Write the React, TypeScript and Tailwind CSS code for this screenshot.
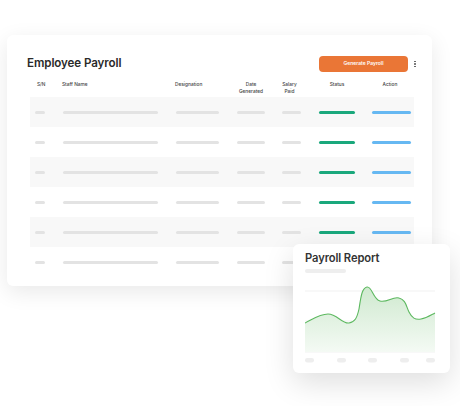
import React from "react";

const font = { fontFamily: "Inter, 'Liberation Sans', sans-serif" };

function Row({ shaded }: { shaded: boolean }) {
  return (
    <div className={`flex h-[30px] items-center ${shaded ? "bg-[#f8f8f8]" : "bg-white"}`}>
      <div className="w-[25px] flex">
        <div className="ml-[5px] h-[3px] w-[10px] rounded-full bg-[#e3e3e3]" />
      </div>
      <div className="w-[115px] flex">
        <div className="ml-[8px] h-[3px] w-[95px] rounded-full bg-[#e3e3e3]" />
      </div>
      <div className="w-[58px] flex">
        <div className="ml-[6px] h-[3px] w-[43px] rounded-full bg-[#e3e3e3]" />
      </div>
      <div className="w-[46px] flex justify-center">
        <div className="h-[3px] w-[28px] rounded-full bg-[#e3e3e3]" />
      </div>
      <div className="w-[34px] flex justify-center">
        <div className="h-[3px] w-[19px] rounded-full bg-[#e3e3e3]" />
      </div>
      <div className="w-[58px] flex justify-center">
        <div className="h-[3px] w-[36px] rounded-full bg-[#1aa87c]" />
      </div>
      <div className="w-[48px] flex justify-center">
        <div className="ml-[3px] h-[3px] w-[39px] rounded-full bg-[#66b8f2]" />
      </div>
    </div>
  );
}

export default function App() {
  const rows = [true, false, true, false, true, false];
  return (
    <div className="relative w-[460px] h-[406px] bg-white overflow-hidden" style={font}>
      <div className="pt-[35px] pl-[7px]">
        <div className="w-[425px] h-[251px] rounded-[6px] bg-white shadow-[0_6px_22px_rgba(0,0,0,0.09)] pt-[21px]">
          <div className="flex items-center justify-between h-[16px] pl-[20px] pr-[16px]">
            <div className="text-[11.6px] font-semibold text-[#2a2a2a] tracking-[-0.1px]">Employee Payroll</div>
            <div className="flex items-center gap-[6px]">
              <div className="w-[89px] h-[16px] rounded-[4px] bg-[#ea7636] flex items-center justify-center text-[5px] font-semibold text-white">
                Generate Payroll
              </div>
              <div className="flex flex-col gap-[1px] w-[2px]">
                <div className="w-[1.5px] h-[1.5px] rounded-full bg-[#555]" />
                <div className="w-[1.5px] h-[1.5px] rounded-full bg-[#555]" />
                <div className="w-[1.5px] h-[1.5px] rounded-full bg-[#555]" />
              </div>
            </div>
          </div>
          <div className="ml-[23px] w-[384px] mt-[9px]">
            <div className="flex h-[16px] items-start text-[4.8px] leading-[7px] font-medium text-[#444]">
              <div className="w-[25px] pl-[7px]">S/N</div>
              <div className="w-[115px] pl-[7px]">Staff Name</div>
              <div className="w-[58px] pl-[5px]">Designation</div>
              <div className="w-[46px] text-center">Date<br />Generated</div>
              <div className="w-[34px] text-center pr-[3px]">Salary<br />Paid</div>
              <div className="w-[58px] text-center">Status</div>
              <div className="w-[48px] text-center">Action</div>
            </div>
            {rows.map((s, i) => (
              <Row key={i} shaded={s} />
            ))}
          </div>
        </div>
      </div>

      <div className="absolute left-[293px] top-[244px] w-[157px] h-[129px] rounded-[6px] bg-white shadow-[0_10px_30px_rgba(0,0,0,0.13)] pl-[12px] pt-[7px]">
        <div className="text-[11.2px] font-semibold text-[#333] leading-[14px] tracking-[-0.1px]">Payroll Report</div>
        <div className="mt-[4px] h-[4px] w-[41px] rounded-full bg-[#eeeeee]" />
        <svg width="131" height="82" viewBox="0 0 131 82" className="mt-[11px] block">
          <defs>
            <linearGradient id="g" x1="0" y1="0" x2="0" y2="1">
              <stop offset="0%" stopColor="#cfe9cf" />
              <stop offset="100%" stopColor="#f4faf4" />
            </linearGradient>
          </defs>
          <line x1="0" y1="7" x2="130" y2="7" stroke="#ededed" strokeWidth="0.8" />
          <line x1="0" y1="37" x2="130" y2="37" stroke="#ededed" strokeWidth="0.8" />
          <line x1="0" y1="68" x2="130" y2="68" stroke="#ededed" strokeWidth="0.8" />
          <path
            d="M0,39 C8,35 15,30 23,30 C32,30 37,40 44,39 C50,38 52,34 54,25 C56,12 57,4 62,3 C67,2 68,15 75,17 C82,19 88,12 94,14 C101,16 101,22 104,28 C107,34 110,36 116,35 C122,34 126,31 130,29 L130,68 L0,68 Z"
            fill="url(#g)"
          />
          <path
            d="M0,39 C8,35 15,30 23,30 C32,30 37,40 44,39 C50,38 52,34 54,25 C56,12 57,4 62,3 C67,2 68,15 75,17 C82,19 88,12 94,14 C101,16 101,22 104,28 C107,34 110,36 116,35 C122,34 126,31 130,29"
            fill="none"
            stroke="#5cb85f"
            strokeWidth="1.1"
          />
          <rect x="0" y="74" width="9" height="4.5" rx="2.25" fill="#eeeeee" />
          <rect x="32" y="74" width="9" height="4.5" rx="2.25" fill="#eeeeee" />
          <rect x="63" y="74" width="9" height="4.5" rx="2.25" fill="#eeeeee" />
          <rect x="95" y="74" width="9" height="4.5" rx="2.25" fill="#eeeeee" />
          <rect x="121" y="74" width="9" height="4.5" rx="2.25" fill="#eeeeee" />
        </svg>
      </div>
    </div>
  );
}
